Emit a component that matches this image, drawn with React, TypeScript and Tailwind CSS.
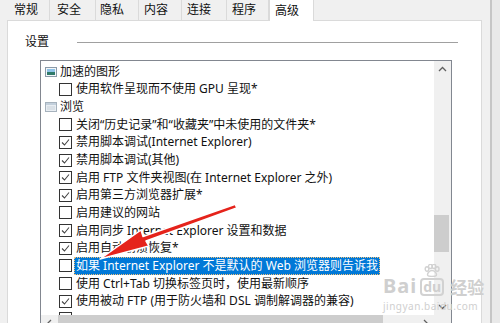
import React from 'react';

type Row =
  | { kind: 'cat'; icon: 'gfx' | 'browse'; label: string }
  | { kind: 'opt'; checked: boolean; label: string; selected?: boolean };

const tabs = [
  { label: '常规', w: 'w-[50px] pl-[14px]' },
  { label: '安全', w: 'w-[46px] pl-[7px]' },
  { label: '隐私', w: 'w-[43px] pl-[4px]' },
  { label: '内容', w: 'w-[43px] pl-[5px]' },
  { label: '连接', w: 'w-[45px] pl-[5px]' },
  { label: '程序', w: 'w-[42px] pl-[5px]' },
];

const rows: Row[] = [
  { kind: 'cat', icon: 'gfx', label: '加速的图形' },
  { kind: 'opt', checked: false, label: '使用软件呈现而不使用 GPU 呈现*' },
  { kind: 'cat', icon: 'browse', label: '浏览' },
  { kind: 'opt', checked: false, label: '关闭“历史记录”和“收藏夹”中未使用的文件夹*' },
  { kind: 'opt', checked: true, label: '禁用脚本调试(Internet Explorer)' },
  { kind: 'opt', checked: true, label: '禁用脚本调试(其他)' },
  { kind: 'opt', checked: true, label: '启用 FTP 文件夹视图(在 Internet Explorer 之外)' },
  { kind: 'opt', checked: true, label: '启用第三方浏览器扩展*' },
  { kind: 'opt', checked: false, label: '启用建议的网站' },
  { kind: 'opt', checked: true, label: '启用同步 Internet Explorer 设置和数据' },
  { kind: 'opt', checked: true, label: '启用自动崩溃恢复*' },
  { kind: 'opt', checked: false, label: '如果 Internet Explorer 不是默认的 Web 浏览器则告诉我', selected: true },
  { kind: 'opt', checked: false, label: '使用 Ctrl+Tab 切换标签页时，使用最新顺序' },
  { kind: 'opt', checked: true, label: '使用被动 FTP (用于防火墙和 DSL 调制解调器的兼容)' },
  { kind: 'opt', checked: true, label: '' },
];

const CatIcon: React.FC<{ icon: 'gfx' | 'browse' }> = ({ icon }) =>
  icon === 'gfx' ? (
    <svg width="12" height="10" viewBox="0 0 12 10">
      <rect x="0.5" y="0.5" width="11" height="9" fill="#f4f7fa" stroke="#8a9aa8" />
      <rect x="2" y="2" width="8" height="3" fill="#8fc3e8" />
      <rect x="2" y="5" width="8" height="3" fill="#2f7a6a" />
    </svg>
  ) : (
    <svg width="12" height="10" viewBox="0 0 12 10">
      <rect x="0.5" y="0.5" width="11" height="9" fill="#e9eef3" stroke="#a6b2bd" />
      <rect x="1" y="1" width="10" height="2" fill="#c3d0dc" />
      <line x1="2" y1="5" x2="10" y2="5" stroke="#c9d2da" />
      <line x1="2" y1="7" x2="10" y2="7" stroke="#c9d2da" />
    </svg>
  );

const CheckBox: React.FC<{ checked: boolean }> = ({ checked }) => (
  <div className="w-[13px] h-[13px] border border-[#333] bg-white shrink-0 flex items-center justify-center">
    {checked && (
      <svg width="11" height="11" viewBox="0 0 11 11">
        <polyline points="2,5.5 4.5,8 9,2.5" fill="none" stroke="#444" strokeWidth="1.1" />
      </svg>
    )}
  </div>
);

const Chevron: React.FC<{ dir: 'up' | 'down' | 'left' | 'right' }> = ({ dir }) => {
  const pts = {
    up: '1,6 4.5,2.5 8,6',
    down: '1,3 4.5,6.5 8,3',
    left: '6,1 2.5,4.5 6,8',
    right: '3,1 6.5,4.5 3,8',
  }[dir];
  return (
    <svg width="9" height="9" viewBox="0 0 9 9">
      <polyline points={pts} fill="none" stroke="#606060" strokeWidth="1.3" />
    </svg>
  );
};

const Paw: React.FC = () => (
  <svg width="16" height="13" viewBox="0 0 16 13" fill="none" stroke="#d2d2d2" strokeWidth="1.4">
    <ellipse cx="3" cy="5" rx="1.8" ry="2.3" />
    <ellipse cx="6.3" cy="2.4" rx="1.8" ry="2.1" />
    <ellipse cx="10" cy="2.4" rx="1.8" ry="2.1" />
    <ellipse cx="13.2" cy="5" rx="1.8" ry="2.3" />
    <path d="M8 6.5c-2.5 0-4.5 2.5-4.5 4.3 0 1.4 1.5 1.6 4.5 1.6s4.5-.2 4.5-1.6c0-1.8-2-4.3-4.5-4.3z" />
  </svg>
);

export default function App() {
  return (
    <div className="w-[500px] h-[323px] overflow-hidden bg-[#f0f0f0] flex relative font-['Noto_Sans','Noto_Sans_CJK_SC',sans-serif] text-[12px] text-[#111]">
      <div className="w-[490px] flex flex-col shrink-0">
        {/* tab strip */}
        <div className="h-[20px] flex shrink-0">
          {tabs.map((t) => (
            <div key={t.label} className={`${t.w} h-[20px] border-r border-[#dadada] flex items-center leading-none`}>
              {t.label}
            </div>
          ))}
          <div className="w-[45px] h-[21px] bg-white border-x border-[#dadada] pl-[5px] flex items-center leading-none z-10">
            高级
          </div>
        </div>

        <div className="flex flex-1">
          <div className="w-[7px] shrink-0" />
          <div className="w-[475px] bg-white border-l border-t border-r border-[#dadada] flex flex-col">
            {/* group box header */}
            <div className="mt-[12px] h-[18px] flex items-center">
              <div className="w-[17px]" />
              <div className="w-[52px]">设置</div>
              <div className="w-[381px] h-px bg-[#a0a0a0]" />
            </div>

            {/* list box */}
            <div className="mt-[9px] ml-[32px] w-[412px] h-[290px] border border-[#828790] flex flex-col">
              <div className="flex">
                <div className="w-[393px] h-[254px] overflow-hidden pt-[2px]">
                  {rows.map((r, i) =>
                    r.kind === 'cat' ? (
                      <div key={i} className="h-[17.65px] flex items-center pl-[4px] gap-[3px] whitespace-nowrap">
                        <CatIcon icon={r.icon} />
                        <span>{r.label}</span>
                      </div>
                    ) : (
                      <div key={i} className="h-[17.65px] flex items-center pl-[18px] gap-[2px] whitespace-nowrap">
                        <CheckBox checked={r.checked} />
                        <span
                          className={
                            r.selected
                              ? 'h-[18px] flex items-center px-[2px] bg-[#0078d7] text-white outline-1 outline-dotted outline-[#f3c27a] -outline-offset-1'
                              : 'px-[2px]'
                          }
                        >
                          {r.label}
                        </span>
                      </div>
                    )
                  )}
                </div>
                {/* vertical scrollbar */}
                <div className="w-[17px] h-[254px] bg-[#f0f0f0] flex flex-col">
                  <div className="h-[17px] flex items-center justify-center">
                    <Chevron dir="up" />
                  </div>
                  <div className="h-[137px]" />
                  <div className="w-[15px] h-[37px] bg-[#cdcdcd]" />
                  <div className="flex-1" />
                  <div className="h-[17px] flex items-center justify-center">
                    <Chevron dir="down" />
                  </div>
                </div>
              </div>
              {/* horizontal scrollbar */}
              <div className="flex h-[17px]">
                <div className="w-[393px] bg-[#f0f0f0] flex">
                  <div className="w-[17px] flex items-center justify-center">
                    <Chevron dir="left" />
                  </div>
                  <div className="w-[325px] bg-[#cdcdcd]" />
                  <div className="flex-1" />
                  <div className="w-[17px] flex items-center justify-center">
                    <Chevron dir="right" />
                  </div>
                </div>
                <div className="w-[17px] bg-[#f0f0f0]" />
              </div>
            </div>
          </div>
          <div className="flex-1" />
        </div>
      </div>
      <div className="w-[2px] bg-[#c6c6c6] shrink-0" />
      <div className="flex-1 bg-[#e9e9e9]" />

      {/* watermark */}
      <div className="absolute left-[383px] top-[264px] flex flex-col items-start text-[#cfcfcf] pointer-events-none">
        <div className="flex items-end leading-none">
          <span className="text-[20px] font-bold tracking-[1px]">Bai</span>
          <div className="flex flex-col items-center ml-[3px]">
            <Paw />
            <span className="text-[14px] font-bold border-2 border-[#d2d2d2] rounded-[4px] px-[1px] leading-[14px] mt-[1px]">du</span>
          </div>
          <span className="text-[17px] font-bold ml-[6px]">经验</span>
        </div>
        <span className="text-[10px] mt-[5px] leading-none tracking-[0.5px]">jingyan.baidu.com</span>
      </div>

      {/* annotation arrow */}
      <svg className="absolute left-0 top-0 pointer-events-none" width="500" height="323" viewBox="0 0 500 323">
        <polygon
          points="100,259 149,246 146,241 236.7,208 235.3,204.2 143,236.5 141,230"
          fill="#e5231b"
          stroke="#ffffff"
          strokeWidth="1.5"
          strokeLinejoin="round"
        />
      </svg>
    </div>
  );
}
